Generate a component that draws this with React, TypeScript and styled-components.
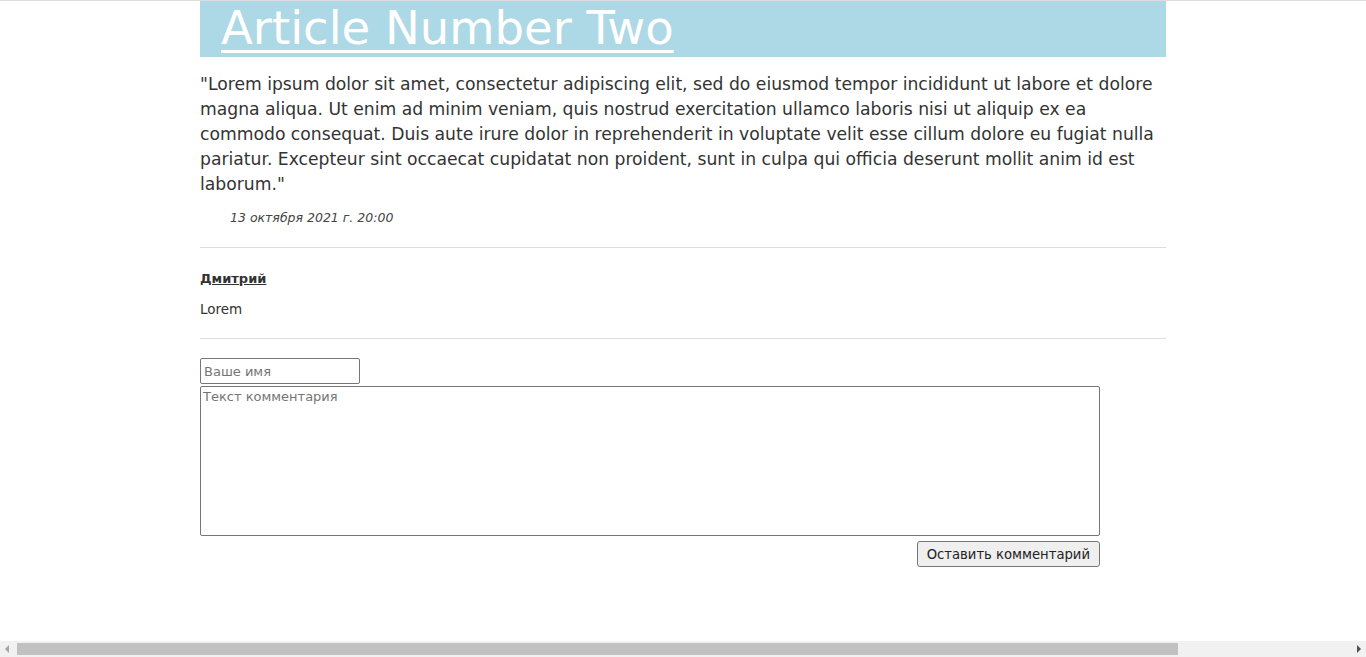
import React from 'react';
import styled, { createGlobalStyle } from 'styled-components';

const GlobalStyle = createGlobalStyle`
  body {
    margin: 0;
    background: white;
    font-family: 'DejaVu Sans', sans-serif;
    color: #333;
  }
`;

const TopRule = styled.div`
  border-top: 1px solid #ddd;
`;

const Article = styled.div`
  width: 966px;
  margin: 0 auto;
`;

const TitleBar = styled.div`
  background: #add8e6;
  height: 56px;
  padding-left: 21px;

  h1 {
    margin: 0;
    font-size: 46.5px;
    font-weight: normal;
    line-height: 54px;

    a {
      color: white;
      text-decoration: underline;
      text-decoration-thickness: 3px;
      text-underline-offset: 6px;
    }
  }
`;

const Body = styled.p`
  margin: 15px 0 0;
  font-size: 17.2px;
  line-height: 25px;
  color: #333;
`;

const Date = styled.div`
  margin-top: 11px;
  padding-left: 30px;
  font-size: 12.5px;
  line-height: 20px;
  font-style: italic;
  color: #444;
`;

const Divider = styled.div<{ $gap: number }>`
  border-bottom: 1px solid #ddd;
  margin-top: ${(p) => p.$gap}px;
`;

const Comment = styled.div`
  padding-top: 21px;
  font-size: 13.5px;

  .author {
    font-size: 13px;
    font-weight: bold;
    color: #333;
    text-decoration: underline;
    line-height: 20px;
  }

  p {
    margin: 10px 0 0;
    line-height: 20px;
  }
`;

const Form = styled.form`
  width: 900px;
  padding-top: 19px;
  display: flex;
  flex-direction: column;
  align-items: flex-start;
  gap: 2px;
`;

const NameInput = styled.input`
  box-sizing: border-box;
  width: 160px;
  height: 26px;
  padding: 0 3px;
  border: 1px solid #767676;
  border-radius: 2px;
  font-family: inherit;
  font-size: 13px;
`;

const TextArea = styled.textarea`
  box-sizing: border-box;
  width: 900px;
  height: 150px;
  padding: 2px;
  border: 1px solid #767676;
  border-radius: 2px;
  font-family: inherit;
  font-size: 13px;
  resize: none;
`;

const Submit = styled.button`
  align-self: flex-end;
  margin-top: 3px;
  height: 26px;
  padding: 0 9px;
  background: #efefef;
  border: 1px solid #767676;
  border-radius: 3px;
  font-family: inherit;
  font-size: 13.2px;
  color: #222;
`;

// browser's horizontal scrollbar, drawn over the bottom edge
const ScrollBar = styled.div`
  position: fixed;
  left: 0;
  right: 0;
  bottom: 0;
  height: 16px;
  background: #f1f1f1;
  display: flex;
  align-items: center;
  padding: 0 5px;
  box-sizing: border-box;
  gap: 8px;
`;

const Arrow = styled.div<{ $dir: 'left' | 'right'; $dark?: boolean }>`
  width: 0;
  height: 0;
  border-top: 4px solid transparent;
  border-bottom: 4px solid transparent;
  ${(p) =>
    p.$dir === 'left'
      ? `border-right: 4px solid ${p.$dark ? '#505050' : '#a3a3a3'};`
      : `border-left: 4px solid ${p.$dark ? '#505050' : '#a3a3a3'};`}
`;

const Track = styled.div`
  flex: 1;
  height: 12px;
  display: flex;
`;

const Thumb = styled.div`
  width: 1161px;
  height: 100%;
  background: #c1c1c1;
`;

const App: React.FC = () => {
  return (
    <>
      <GlobalStyle />
      <TopRule />
      <Article>
        <TitleBar>
          <h1>
            <a href='#'>Article Number Two</a>
          </h1>
        </TitleBar>
        <Body>
          "Lorem ipsum dolor sit amet, consectetur adipiscing elit, sed do
          eiusmod tempor incididunt ut labore et dolore magna aliqua. Ut enim ad
          minim veniam, quis nostrud exercitation ullamco laboris nisi ut
          aliquip ex ea commodo consequat. Duis aute irure dolor in
          reprehenderit in voluptate velit esse cillum dolore eu fugiat nulla
          pariatur. Excepteur sint occaecat cupidatat non proident, sunt in
          culpa qui officia deserunt mollit anim id est laborum."
        </Body>
        <Date>13 октября 2021 г. 20:00</Date>
        <Divider $gap={19} />
        <Comment>
          <div className='author'>Дмитрий</div>
          <p>Lorem</p>
        </Comment>
        <Divider $gap={19} />
        <Form onSubmit={(e) => e.preventDefault()}>
          <NameInput placeholder='Ваше имя' />
          <TextArea placeholder='Текст комментария' />
          <Submit type='submit'>Оставить комментарий</Submit>
        </Form>
      </Article>
      <ScrollBar>
        <Arrow $dir='left' />
        <Track>
          <Thumb />
        </Track>
        <Arrow $dir='right' $dark />
      </ScrollBar>
    </>
  );
};

export default App;
